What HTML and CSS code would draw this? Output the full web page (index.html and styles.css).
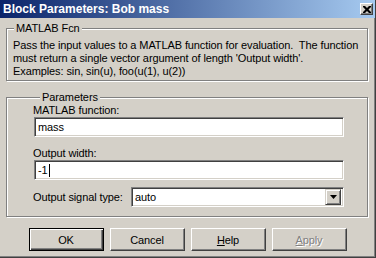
FILE: index.html
```html
<!DOCTYPE html>
<html lang="en">
<head>
    <meta charset="UTF-8">
    <meta name="viewport" content="width=device-width, initial-scale=1.0">
    <title>Block Parameters: Bob mass</title>
    <link rel="stylesheet" href="styles.css">
</head>
<body>
    <div class="window">
        <div class="titlebar">
            <span class="title">Block Parameters: Bob mass</span>
            <div class="close">
                <svg width="8" height="7" viewBox="0 0 8 7">
                    <path d="M0 0h2l2 2 2-2h2v1l-2.5 2.5L8 6v1H6L4 5 2 7H0V6l2.5-2.5L0 1z" fill="#000"/>
                </svg>
            </div>
        </div>

        <fieldset class="group">
            <legend>MATLAB Fcn</legend>
            <p class="desc">Pass the input values to a MATLAB function for evaluation.&nbsp; The function<br>must return a single vector argument of length 'Output width'.<br>Examples: sin, sin(u), foo(u(1), u(2))</p>
        </fieldset>

        <fieldset class="group params">
            <legend>Parameters</legend>
            <div class="label">MATLAB function:</div>
            <div class="field">mass</div>
            <div class="label second">Output width:</div>
            <div class="field">-1<span class="caret"></span></div>
            <div class="row">
                <div class="label">Output signal type:</div>
                <div class="combo">
                    <span class="combo-text">auto</span>
                    <div class="arrow">
                        <svg width="7" height="4" viewBox="0 0 7 4"><path d="M0 0h7L3.5 4z" fill="#000"/></svg>
                    </div>
                </div>
            </div>
        </fieldset>

        <div class="buttons">
            <div class="button default">OK</div>
            <div class="button">Cancel</div>
            <div class="button"><u>H</u>elp</div>
            <div class="button disabled"><u>A</u>pply</div>
        </div>
    </div>
</body>
</html>
```

FILE: styles.css
```css
body{
    margin: 0;
    background-color: #d4d0c8;
    font-family: "Liberation Sans", Arial, sans-serif;
    font-size: 11px;
    letter-spacing: -0.1px;
    color: #000;
}
.window{
    box-sizing: border-box;
    width: 376px;
    height: 258px;
    border-right: 1px solid #404040;
    border-bottom: 1px solid #404040;
    box-shadow: inset -1px -1px 0 #808080;
}
.titlebar{
    height: 18px;
    display: flex;
    align-items: center;
    justify-content: space-between;
    padding: 0 2px 0 3px;
    background: linear-gradient(to right, #0a246a, #a6caf0);
}
.title{
    color: #fff;
    font-weight: bold;
    font-size: 12px;
    letter-spacing: 0;
}
.close{
    box-sizing: border-box;
    width: 13px;
    height: 12px;
    display: flex;
    align-items: center;
    justify-content: center;
    background-color: #d4d0c8;
    border: 1px solid;
    border-color: #fff #404040 #404040 #fff;
    box-shadow: inset -1px -1px 0 #808080;
}
.group{
    margin: 4px 7px 0 6px;
    padding: 0;
    border: 1px solid #808080;
    box-shadow: inset 1px 1px 0 #fff, 1px 1px 0 #fff;
}
.group legend{
    margin-left: 7px;
    padding: 0 2px;
    line-height: 13px;
    background-color: #d4d0c8;
}
.desc{
    margin: 4px 0 2px 6px;
    line-height: 13px;
    white-space: nowrap;
}
.params{
    margin-top: 10px;
    padding: 0 23px 9px 26px;
}
.label{
    line-height: 13px;
}
.label.second{
    margin-top: 10px;
}
.field{
    box-sizing: border-box;
    height: 20px;
    margin-left: 1px;
    padding-left: 3px;
    display: flex;
    align-items: center;
    background-color: #fff;
    border: 1px solid;
    border-color: #808080 #fff #fff #808080;
    box-shadow: inset 1px 1px 0 #404040, inset -1px -1px 0 #d4d0c8;
}
.caret{
    width: 1px;
    height: 13px;
    margin-left: 1px;
    background-color: #000;
}
.row{
    margin-top: 7px;
    display: flex;
    align-items: center;
    justify-content: space-between;
}
.combo{
    box-sizing: border-box;
    width: 213px;
    height: 20px;
    padding: 2px;
    display: flex;
    align-items: center;
    background-color: #fff;
    border: 1px solid;
    border-color: #808080 #fff #fff #808080;
    box-shadow: inset 1px 1px 0 #404040, inset -1px -1px 0 #d4d0c8;
}
.combo-text{
    flex: 1;
    padding-left: 1px;
}
.arrow{
    box-sizing: border-box;
    width: 16px;
    height: 16px;
    display: flex;
    align-items: center;
    justify-content: center;
    background-color: #d4d0c8;
    border: 1px solid;
    border-color: #d4d0c8 #404040 #404040 #d4d0c8;
    box-shadow: inset 1px 1px 0 #fff, inset -1px -1px 0 #808080;
}
.buttons{
    margin-top: 11px;
    display: flex;
    justify-content: center;
    gap: 6px;
}
.button{
    box-sizing: border-box;
    width: 75px;
    height: 23px;
    display: flex;
    align-items: center;
    justify-content: center;
    border: 1px solid;
    border-color: #fff #404040 #404040 #fff;
    box-shadow: inset -1px -1px 0 #808080;
}
.button.default{
    border-color: #000;
    box-shadow: inset 1px 1px 0 #fff, inset -1px -1px 0 #404040, inset -2px -2px 0 #808080;
}
.button.disabled{
    color: #808080;
    text-shadow: 1px 1px 0 #fff;
}
```
